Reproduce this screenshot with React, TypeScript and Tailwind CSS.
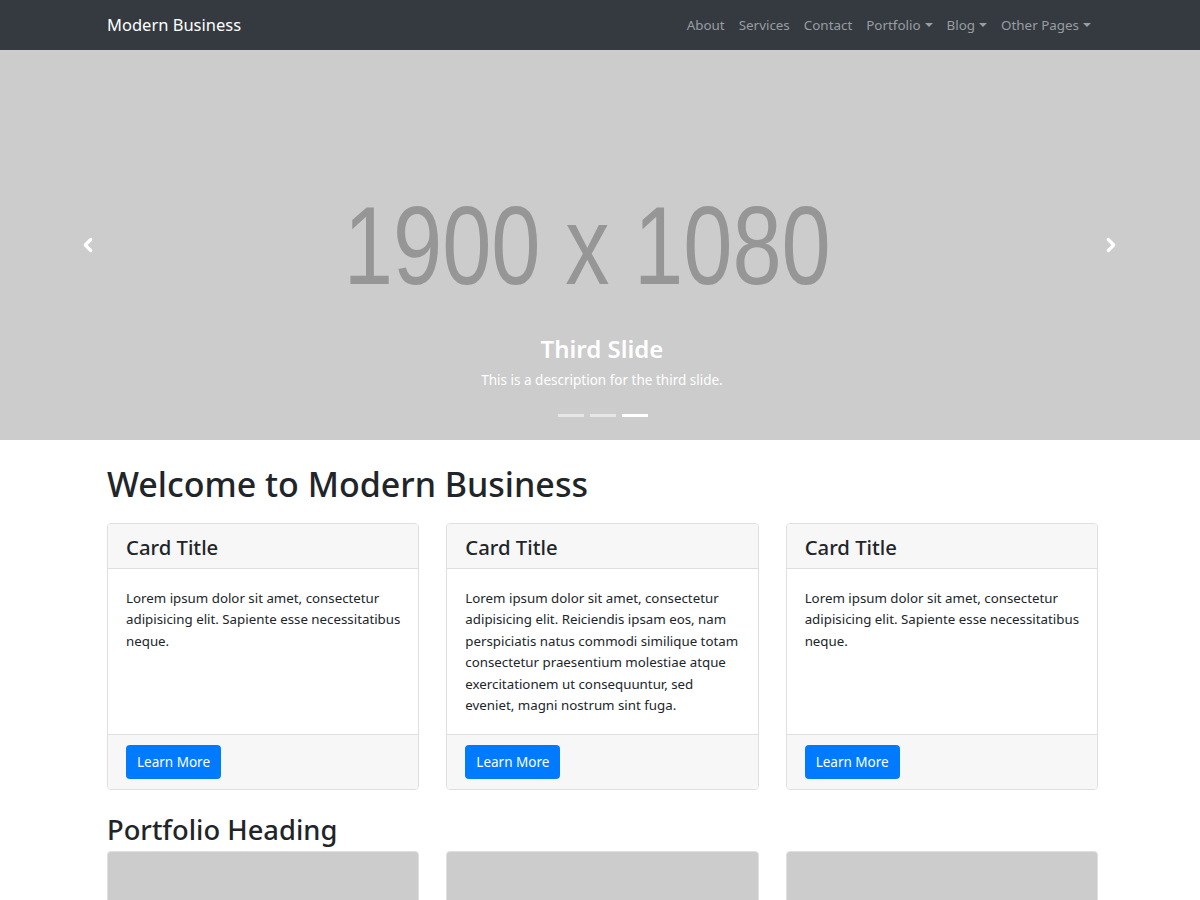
import { ChevronLeft, ChevronRight } from 'lucide-react';

const font = { fontFamily: '"Noto Sans", "Open Sans", sans-serif' };

const cards = [
  'Lorem ipsum dolor sit amet, consectetur adipisicing elit. Sapiente esse necessitatibus neque.',
  'Lorem ipsum dolor sit amet, consectetur adipisicing elit. Reiciendis ipsam eos, nam perspiciatis natus commodi similique totam consectetur praesentium molestiae atque exercitationem ut consequuntur, sed eveniet, magni nostrum sint fuga.',
  'Lorem ipsum dolor sit amet, consectetur adipisicing elit. Sapiente esse necessitatibus neque.',
];

function NavLink({ label, caret }: { label: string; caret?: boolean }) {
  return (
    <a href="#" className="flex items-center px-[7px] text-[13.4px] text-[#9a9da0] hover:text-white">
      {label}
      {caret && (
        <span className="ml-[4px] inline-block w-0 h-0 border-l-[4px] border-r-[4px] border-t-[4px] border-l-transparent border-r-transparent border-t-[#9a9da0]" />
      )}
    </a>
  );
}

export default function App() {
  return (
    <div className="min-h-[900px] bg-white text-[#212529]" style={font}>
      <nav className="h-[50px] bg-[#343a40]">
        <div className="ml-[107px] w-[991px] h-full flex items-center justify-between pt-[1px]">
          <a href="#" className="text-[16.5px] text-white">Modern Business</a>
          <div className="flex items-center">
            <NavLink label="About" />
            <NavLink label="Services" />
            <NavLink label="Contact" />
            <NavLink label="Portfolio" caret />
            <NavLink label="Blog" caret />
            <NavLink label="Other Pages" caret />
          </div>
        </div>
      </nav>

      <header className="relative h-[390px] bg-[#cccccc] overflow-hidden">
        <div className="h-full flex items-center justify-center pr-[26px] pt-[2px]">
          <span className="text-[#969696] text-[112px] leading-none scale-x-[0.79]" style={{ fontFamily: '"Liberation Sans", Arial, sans-serif' }}>
            1900 x 1080
          </span>
        </div>
        <button className="absolute left-[77px] top-[184px] text-white">
          <ChevronLeft size={22} strokeWidth={3.5} />
        </button>
        <button className="absolute right-[78px] top-[184px] text-white">
          <ChevronRight size={22} strokeWidth={3.5} />
        </button>
        <div className="absolute left-0 right-0 top-[283px] flex flex-col items-center text-white pl-[4px]">
          <h3 className="text-[24px] font-semibold leading-[32px]">Third Slide</h3>
          <p className="text-[13.5px] leading-[20px] mt-[5px]">This is a description for the third slide.</p>
        </div>
        <div className="absolute left-0 right-0 top-[364px] flex justify-center gap-[6px] pl-[5px]">
          <span className="w-[26px] h-[3px] bg-white/50" />
          <span className="w-[26px] h-[3px] bg-white/50" />
          <span className="w-[26px] h-[3px] bg-white" />
        </div>
      </header>

      <main className="ml-[107px] w-[991px]">
        <h1 className="mt-[21px] mb-[16px] text-[34px] leading-[46px] font-medium">Welcome to Modern Business</h1>
        <div className="grid grid-cols-3 gap-[27px]">
          {cards.map((text, i) => (
            <div key={i} className="flex flex-col border border-[#dfdfdf] rounded-[4px] overflow-hidden">
              <div className="h-[45px] px-[18px] flex items-center bg-[#f7f7f7] border-b border-[#dfdfdf]">
                <h4 className="text-[20.3px] font-medium leading-none mt-[2px]">Card Title</h4>
              </div>
              <div className="flex-1 pl-[18px] pr-[14px] pt-[19px] pb-[18px]">
                <p className="text-[13.3px] leading-[21.4px]">{text}</p>
              </div>
              <div className="px-[18px] py-[10px] bg-[#f7f7f7] border-t border-[#dfdfdf]">
                <a href="#" className="inline-flex items-center h-[34px] px-[11px] rounded-[4px] bg-[#007bff] text-white text-[13.5px]">
                  Learn More
                </a>
              </div>
            </div>
          ))}
        </div>
        <h2 className="mt-[23px] mb-[4px] text-[27.3px] leading-[34px] font-medium">Portfolio Heading</h2>
        <div className="grid grid-cols-3 gap-[27px]">
          {[0, 1, 2].map((i) => (
            <div key={i} className="h-[200px] bg-[#cccccc] border border-[#dfdfdf] rounded-t-[4px]" />
          ))}
        </div>
      </main>
    </div>
  );
}
